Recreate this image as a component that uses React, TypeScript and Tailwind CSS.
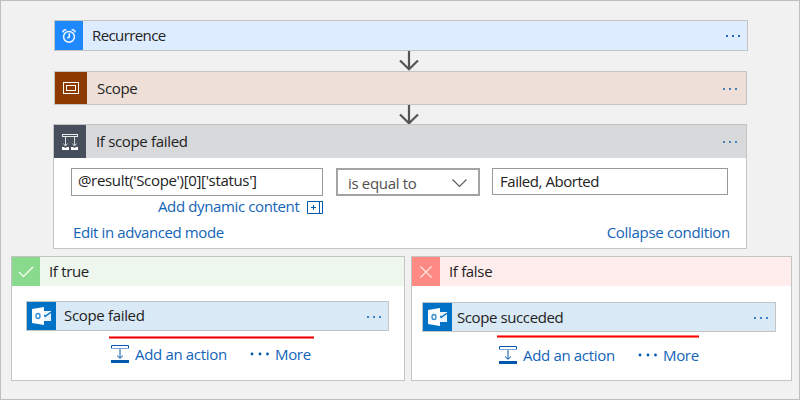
import type { ReactNode } from "react";

function Dots({ className }: { className: string }) {
  return (
    <svg className={className} width="16" height="4" viewBox="0 0 16 4" fill="currentColor" shapeRendering="crispEdges">
      <rect x="1" y="1" width="2" height="2" />
      <rect x="7" y="1" width="2" height="2" />
      <rect x="13" y="1" width="2" height="2" />
    </svg>
  );
}

function Arrow({ className }: { className: string }) {
  return (
    <svg className={className} width="20" height="20" viewBox="0 0 20 20" fill="none" stroke="#555" strokeWidth="2.2">
      <path d="M10 0V18M1 9.5L10 18.3L19 9.5" />
    </svg>
  );
}

function ClockIcon() {
  return (
    <svg width="14" height="16" viewBox="0 0 14 16" fill="none" stroke="#f0f7ff" strokeWidth="1.5">
      <circle cx="7" cy="8.8" r="5.4" />
      <path d="M7.3 5.2V9L5.4 10.2M.8 4.4C1 2.6 2.4 1.5 4.4 1.9M13.2 4.4C13 2.6 11.6 1.5 9.6 1.9" />
    </svg>
  );
}

function ScopeIcon() {
  return (
    <svg width="16" height="12" viewBox="0 0 16 12" fill="none" stroke="#fff">
      <rect x=".5" y=".5" width="15" height="11" />
      <rect x="3.5" y="3.5" width="9" height="5" />
    </svg>
  );
}

function ConditionIcon() {
  return (
    <svg width="16" height="16" viewBox="0 0 16 16" fill="none" stroke="#e8eaec">
      <rect x=".5" y=".5" width="15" height="2" />
      <path d="M3.5 3V11M12.5 3V11M1.3 9.5L3.5 12L5.7 9.5M10.3 9.5L12.5 12L14.7 9.5" strokeWidth=".9" />
      <path d="M0 13H2L3.5 14L5 13H7V16H0ZM9 13H11L12.5 14L14 13H16V16H9Z" fill="#fff" stroke="none" />
    </svg>
  );
}

function OutlookIcon() {
  return (
    <svg width="20" height="18" viewBox="0 0 20 18" fill="none">
      <path d="M11 4H19V14H11Z" fill="#e8f3fb" />
      <path d="M11 7.2L13.2 9.4L19 5.2" stroke="#0072c6" strokeWidth="1.4" />
      <path d="M0 2L12 0V18L0 16Z" fill="#fff" />
      <ellipse cx="6" cy="9" rx="2" ry="2.5" stroke="#3a8fd0" strokeWidth="1.4" />
    </svg>
  );
}

function InsertIcon() {
  return (
    <svg width="18" height="18" viewBox="0 0 18 18" fill="none" stroke="#0058ad">
      <path d="M.5 4V.5H17.5V4" />
      <path d="M0 3.5H18" stroke="#7fa9d5" />
      <path d="M9 4V13M6 10.5L9 13.3L12 10.5" />
      <path d="M0 15H18V18H0Z" fill="#0058ad" stroke="none" />
    </svg>
  );
}

function Actions({ className }: { className: string }) {
  return (
    <div className={`flex h-[20px] items-center text-[#1264b8] ${className}`}>
      <InsertIcon />
      <span className="ml-[6px] w-[115px]">Add an action</span>
      <svg width="20" height="4" viewBox="0 0 20 4" fill="#0058ad">
        <circle cx="2" cy="2" r="1.4" />
        <circle cx="10" cy="2" r="1.4" />
        <circle cx="17.5" cy="2" r="1.4" />
      </svg>
      <span className="ml-[5px]">More</span>
    </div>
  );
}

function IconBox({ className, children }: { className: string; children: ReactNode }) {
  return <div className={`flex h-full shrink-0 items-center justify-center ${className}`}>{children}</div>;
}

export default function App() {
  return (
    <div className="h-[400px] w-[800px] overflow-hidden border border-[#bfbfbf] bg-[#f1f1f1] font-['Open_Sans','Noto_Sans',sans-serif] text-[15px] leading-[20px] tracking-[-0.33px] whitespace-nowrap text-[#222]">
      <div className="mt-[19px] ml-[53px] flex h-[31px] w-[694px] items-center border border-[#c4c4c4] bg-[#deecff]">
        <IconBox className="w-[28px] bg-[#1e88ff]"><ClockIcon /></IconBox>
        <span className="mb-[1px] ml-[9px] tracking-[-0.6px]">Recurrence</span>
        <Dots className="mt-[1px] mr-[6px] ml-auto text-[#2469b8]" />
      </div>
      <Arrow className="ml-[398px]" />
      <div className="ml-[53px] flex h-[34px] w-[693px] items-center border border-[#c4c4c4] bg-[#eee0d9]">
        <IconBox className="w-[32px] bg-[#8c3a00]"><ScopeIcon /></IconBox>
        <span className="ml-[10px]">Scope</span>
        <Dots className="mt-[2px] mr-[8px] ml-auto text-[#477fbd]" />
      </div>
      <div className="h-[19px] overflow-hidden"><Arrow className="ml-[398px]" /></div>

      <div className="ml-[52px] h-[125px] w-[694px] border border-[#c4c4c4] bg-white">
        <div className="flex h-[33px] items-center bg-[#d8d9db]">
          <IconBox className="w-[32px] bg-[#464f5b]"><ConditionIcon /></IconBox>
          <span className="mb-[1px] ml-[10px]">If scope failed</span>
          <Dots className="mt-[1px] mr-[8px] ml-auto text-[#477fbd]" />
        </div>
        <div className="mt-[10px] ml-[17px] flex items-start">
          <div className="h-[28px] w-[252px] border border-[#999] pt-[1px] pl-[6px] tracking-[-0.33px]">@result('Scope')[0]['status']</div>
          <div className="ml-[13px] flex h-[28px] w-[144px] items-center justify-between border-2 border-[#a3a3a3] pt-[2px] pr-[11px] pl-[10px] text-[#505050]">
            <span>is equal to</span>
            <svg width="15" height="9" viewBox="0 0 15 9" fill="none" stroke="#555" strokeWidth="1.1"><path d="M.5 .5L7.5 7.5L14.5 .5" /></svg>
          </div>
          <div className="ml-[12px] h-[27px] w-[236px] border border-[#999] pt-[2px] pl-[7px] tracking-[-0.45px]">Failed, Aborted</div>
        </div>
        <div className="ml-[104px] flex h-[20px] items-center text-[#1264b8]">
          <span className="w-[149px] tracking-[-0.37px]">Add dynamic content</span>
          <svg className="mt-[3px]" width="16" height="13" viewBox="0 0 16 13" fill="none" stroke="#0058ad">
            <path d="M.5 .5H15.5V12.5H.5ZM12.5 .5V12.5M4 6.5H9M6.5 4V9" />
          </svg>
        </div>
        <div className="mt-[6px] mr-[16px] ml-[19px] flex justify-between text-[#1264b8]">
          <span className="tracking-[-0.4px]">Edit in advanced mode</span>
          <span className="tracking-[-0.3px]">Collapse condition</span>
        </div>
      </div>

      <div className="mt-[7px] ml-[10px] flex gap-[6px]">
        <div className="h-[125px] w-[394px] border border-[#c4c4c4] bg-white">
          <div className="flex h-[29px] items-center bg-[#edf7ee]">
            <IconBox className="w-[28px] bg-[#89da8c]">
              <svg width="16" height="12" viewBox="0 0 16 12" fill="none" stroke="#fff" strokeWidth="1.2"><path d="M1 6L5.5 10.5L15 1" /></svg>
            </IconBox>
            <span className="mb-[1px] ml-[9px]">If true</span>
          </div>
          <div className="mt-[15px] ml-[14px] flex h-[30px] w-[363px] items-center border border-[#c4c4c4] bg-[#d9e9f5]">
            <IconBox className="w-[29px] bg-[#0072c6]"><OutlookIcon /></IconBox>
            <span className="mb-[2px] ml-[8px]">Scope failed</span>
            <Dots className="mt-[2px] mr-[6px] ml-auto text-[#3b83cb]" />
          </div>
          <div className="mt-[5px] ml-[97px] h-[3px] w-[205px] border-y border-[#ff7474] bg-[#e60000]" />
          <Actions className="mt-[5px] ml-[99px]" />
        </div>
        <div className="h-[125px] w-[381px] border border-[#c4c4c4] bg-white">
          <div className="flex h-[29px] items-center bg-[#ffecec]">
            <IconBox className="w-[28px] bg-[#ff8a84]">
              <svg width="12" height="12" viewBox="0 0 12 12" fill="none" stroke="#ffe4e2" strokeWidth="1.2"><path d="M.5 .5L11.5 11.5M11.5 .5L.5 11.5" /></svg>
            </IconBox>
            <span className="mb-[1px] ml-[9px]">If false</span>
          </div>
          <div className="mt-[16px] ml-[10px] flex h-[30px] w-[354px] items-center border border-[#c4c4c4] bg-[#d9e9f5]">
            <IconBox className="w-[29px] bg-[#0072c6]"><OutlookIcon /></IconBox>
            <span className="ml-[5px] tracking-[-0.4px]">Scope succeded</span>
            <Dots className="mt-[2px] mr-[6px] ml-auto text-[#3b83cb]" />
          </div>
          <div className="mt-[3px] ml-[85px] h-[3px] w-[202px] border-y border-[#ff7474] bg-[#f00]" />
          <Actions className="mt-[7px] ml-[87px]" />
        </div>
      </div>
    </div>
  );
}
